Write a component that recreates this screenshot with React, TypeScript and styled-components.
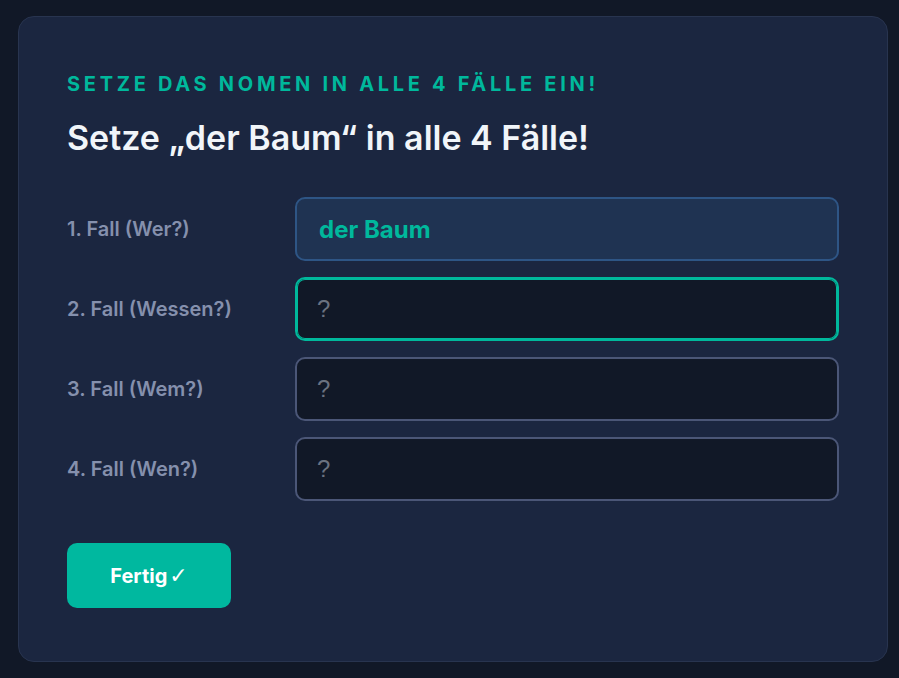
import React from "react";
import styled, { createGlobalStyle } from "styled-components";

const GlobalStyle = createGlobalStyle`
  html, body {
    margin: 0;
    padding: 0;
    background: #111827;
  }

  body {
    font-family: "Inter", "Lato", sans-serif;
  }
`;

const Page = styled.div`
  padding: 16px 11px 16px 18px;
`;

const Card = styled.section`
  box-sizing: border-box;
  width: 870px;
  height: 646px;
  padding: 55px 48px 48px;
  background: #1b2640;
  border: 1px solid #28344f;
  border-radius: 16px;
`;

const Eyebrow = styled.div`
  color: #00b89c;
  font-size: 20px;
  font-weight: 700;
  letter-spacing: 3.7px;
  line-height: 24px;
  text-transform: uppercase;
`;

const Heading = styled.h1`
  margin: 22px 0 0;
  color: #f1f5f9;
  font-size: 34px;
  font-weight: 600;
  line-height: 40px;
`;

const Rows = styled.div`
  display: grid;
  grid-template-columns: 228px 1fr;
  row-gap: 16px;
  align-items: center;
  margin-top: 39px;
`;

const Label = styled.label`
  color: #8590ad;
  font-size: 20px;
  font-weight: 600;
`;

const Field = styled.input<{ $state: "given" | "active" | "idle" }>`
  box-sizing: border-box;
  width: 100%;
  height: 64px;
  padding: 0 ${(p) => (p.$state === "given" ? "22px" : "20px")};
  border-radius: 10px;
  border: 2px solid
    ${(p) =>
      p.$state === "given" ? "#2e5585" : p.$state === "active" ? "#00b89c" : "#4b5677"};
  box-shadow: ${(p) => (p.$state === "active" ? "inset 0 0 0 1px #00b89c" : "none")};
  background: ${(p) => (p.$state === "given" ? "#1f3352" : "#111827")};
  color: ${(p) => (p.$state === "given" ? "#00b89c" : "#e2e8f0")};
  font-family: ${(p) =>
    p.$state === "given" ? `"Inter", sans-serif` : `"Liberation Sans", Arial, sans-serif`};
  font-size: 24px;
  font-weight: ${(p) => (p.$state === "given" ? 700 : 400)};
  outline: none;

  &::placeholder {
    color: #6b7280;
  }
`;

const Button = styled.button`
  display: flex;
  align-items: center;
  justify-content: center;
  gap: 2px;
  margin-top: 42px;
  width: 164px;
  height: 65px;
  border: none;
  border-radius: 10px;
  background: #00b89f;
  color: #ffffff;
  font-family: "Inter", sans-serif;
  font-size: 20px;
  font-weight: 700;
  cursor: pointer;
`;

const Check = styled.span`
  font-family: "DejaVu Sans", sans-serif;
  font-size: 22px;
  font-weight: 400;
`;

const cases = [
  { label: "1. Fall (Wer?)", value: "der Baum" },
  { label: "2. Fall (Wessen?)", value: "" },
  { label: "3. Fall (Wem?)", value: "" },
  { label: "4. Fall (Wen?)", value: "" },
];

export default function App() {
  return (
    <>
      <GlobalStyle />
      <Page>
        <Card>
          <Eyebrow>Setze das Nomen in alle 4 Fälle ein!</Eyebrow>
          <Heading>Setze „der Baum“ in alle 4 Fälle!</Heading>
          <Rows>
            {cases.map((c, i) => (
              <React.Fragment key={c.label}>
                <Label>{c.label}</Label>
                {i === 0 ? (
                  <Field $state="given" value={c.value} readOnly />
                ) : (
                  <Field $state={i === 1 ? "active" : "idle"} placeholder="?" />
                )}
              </React.Fragment>
            ))}
          </Rows>
          <Button>
            Fertig<Check>✓</Check>
          </Button>
        </Card>
      </Page>
    </>
  );
}
